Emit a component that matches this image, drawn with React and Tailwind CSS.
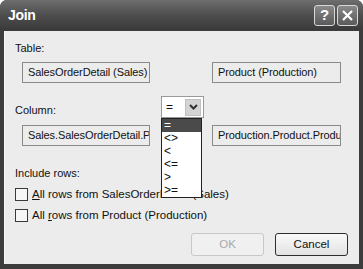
import React from "react";

const font = { fontFamily: '"Liberation Sans", Arial, sans-serif' };

const Field = ({ children, className = "" }) => (
  <div
    className={`h-[21px] w-[128px] border border-[#8a8a8a] bg-[#ececec] px-[5px] text-[11px] tracking-[-0.1px] leading-[19px] text-[#111] overflow-hidden whitespace-nowrap ${className}`}
  >
    {children}
  </div>
);

const Check = ({ children }) => (
  <div className="flex items-center gap-[4px] h-[21px]">
    <div className="w-[13px] h-[13px] border border-[#3a3a3a] bg-[#f6f6f6]" />
    <span className="text-[11.5px] text-[#111]">{children}</span>
  </div>
);

const ops = ["=", "<>", "<", "<=", ">", ">="];

export default function App() {
  return (
    <div className="w-[363px] h-[269px] bg-white" style={font}>
      <div className="relative w-full h-full flex flex-col rounded-t-[7px] bg-[#3c3c3c] overflow-hidden">
        {/* Title bar */}
        <div className="h-[30px] flex items-center justify-between pl-[8px] pr-[5px] bg-gradient-to-b from-[#6e6e6e] via-[#4e4e4e] to-[#3a3a3a]">
          <span className="text-white font-bold text-[14px] tracking-tight">Join</span>
          <div className="flex gap-[2px]">
            <div className="w-[21px] h-[21px] rounded-[3px] border border-[#d8d8d8] bg-gradient-to-b from-[#8a8a8a] to-[#5a5a5a] flex items-center justify-center text-white font-bold text-[15px]">
              ?
            </div>
            <div className="w-[21px] h-[21px] rounded-[3px] border border-[#d8d8d8] bg-gradient-to-b from-[#8a8a8a] to-[#5a5a5a] flex items-center justify-center">
              <svg width="13" height="13" viewBox="0 0 13 13">
                <path d="M2 2 L11 11 M11 2 L2 11" stroke="#fff" strokeWidth="2.2" />
              </svg>
            </div>
          </div>
        </div>

        {/* Body */}
        <div className="flex-1 mx-[4px] mb-[5px] mt-[1px] bg-[#ececec] border-l border-[#f8f8f8] px-[10px] pt-[8px] text-[11px] text-[#111] flex flex-col">
          <div className="h-[18px] leading-[18px]">Table:</div>
          <div className="flex justify-between mt-[5px] pl-[7px] pr-[8px]">
            <Field>SalesOrderDetail (Sales)</Field>
            <Field className="w-[129px]">Product (Production)</Field>
          </div>

          <div className="h-[18px] leading-[18px] mt-[18px]">Column:</div>
          <div className="flex justify-between mt-[6px] pl-[7px] pr-[8px]">
            <Field>Sales.SalesOrderDetail.Pr</Field>
            <Field className="w-[129px]">Production.Product.Produ</Field>
          </div>

          <div className="h-[18px] leading-[18px] mt-[18px]">Include rows:</div>
          <div className="flex flex-col mt-[2px]">
            <Check>
              <span className="underline">A</span>ll rows from SalesOrderDetail (Sales)
            </Check>
            <Check>
              All <span className="underline">r</span>ows from Product (Production)
            </Check>
          </div>

          <div className="flex justify-end gap-[11px] mt-[7px] pr-[1px]">
            <div className="w-[73px] h-[23px] rounded-[3px] border border-[#c8c8c8] bg-[#f0f0f0] flex items-center justify-center text-[11.5px] text-[#a8a8a8]">
              OK
            </div>
            <div className="w-[73px] h-[23px] rounded-[3px] border border-[#2e2e2e] bg-gradient-to-b from-[#fafafa] to-[#e2e2e2] flex items-center justify-center text-[11.5px] text-[#111]">
              Cancel
            </div>
          </div>
        </div>

        {/* Operator combo + open list */}
        <div className="absolute left-[161px] top-[96px] w-[43px]">
          <div className="h-[22px] border border-[#9a9a9a] bg-white flex items-center justify-between pl-[4px] pr-[2px]">
            <span className="text-[12px] text-[#111]">=</span>
            <div className="w-[16px] h-[17px] bg-[#d4d4d4] border border-[#c0c0c0] flex items-center justify-center">
              <svg width="9" height="6" viewBox="0 0 9 6">
                <path d="M1 1 L4.5 4.5 L8 1" stroke="#333" strokeWidth="2" fill="none" />
              </svg>
            </div>
          </div>
          <div className="w-[41px] h-[80px] border border-[#222] bg-white flex flex-col text-[12px] leading-[13px] text-[#111]">
            {ops.map((o, i) => (
              <div
                key={i}
                className={`h-[13px] pl-[2px] ${i === 0 ? "bg-[#4a4a4a] text-white" : ""}`}
              >
                {o}
              </div>
            ))}
          </div>
        </div>
      </div>
    </div>
  );
}
